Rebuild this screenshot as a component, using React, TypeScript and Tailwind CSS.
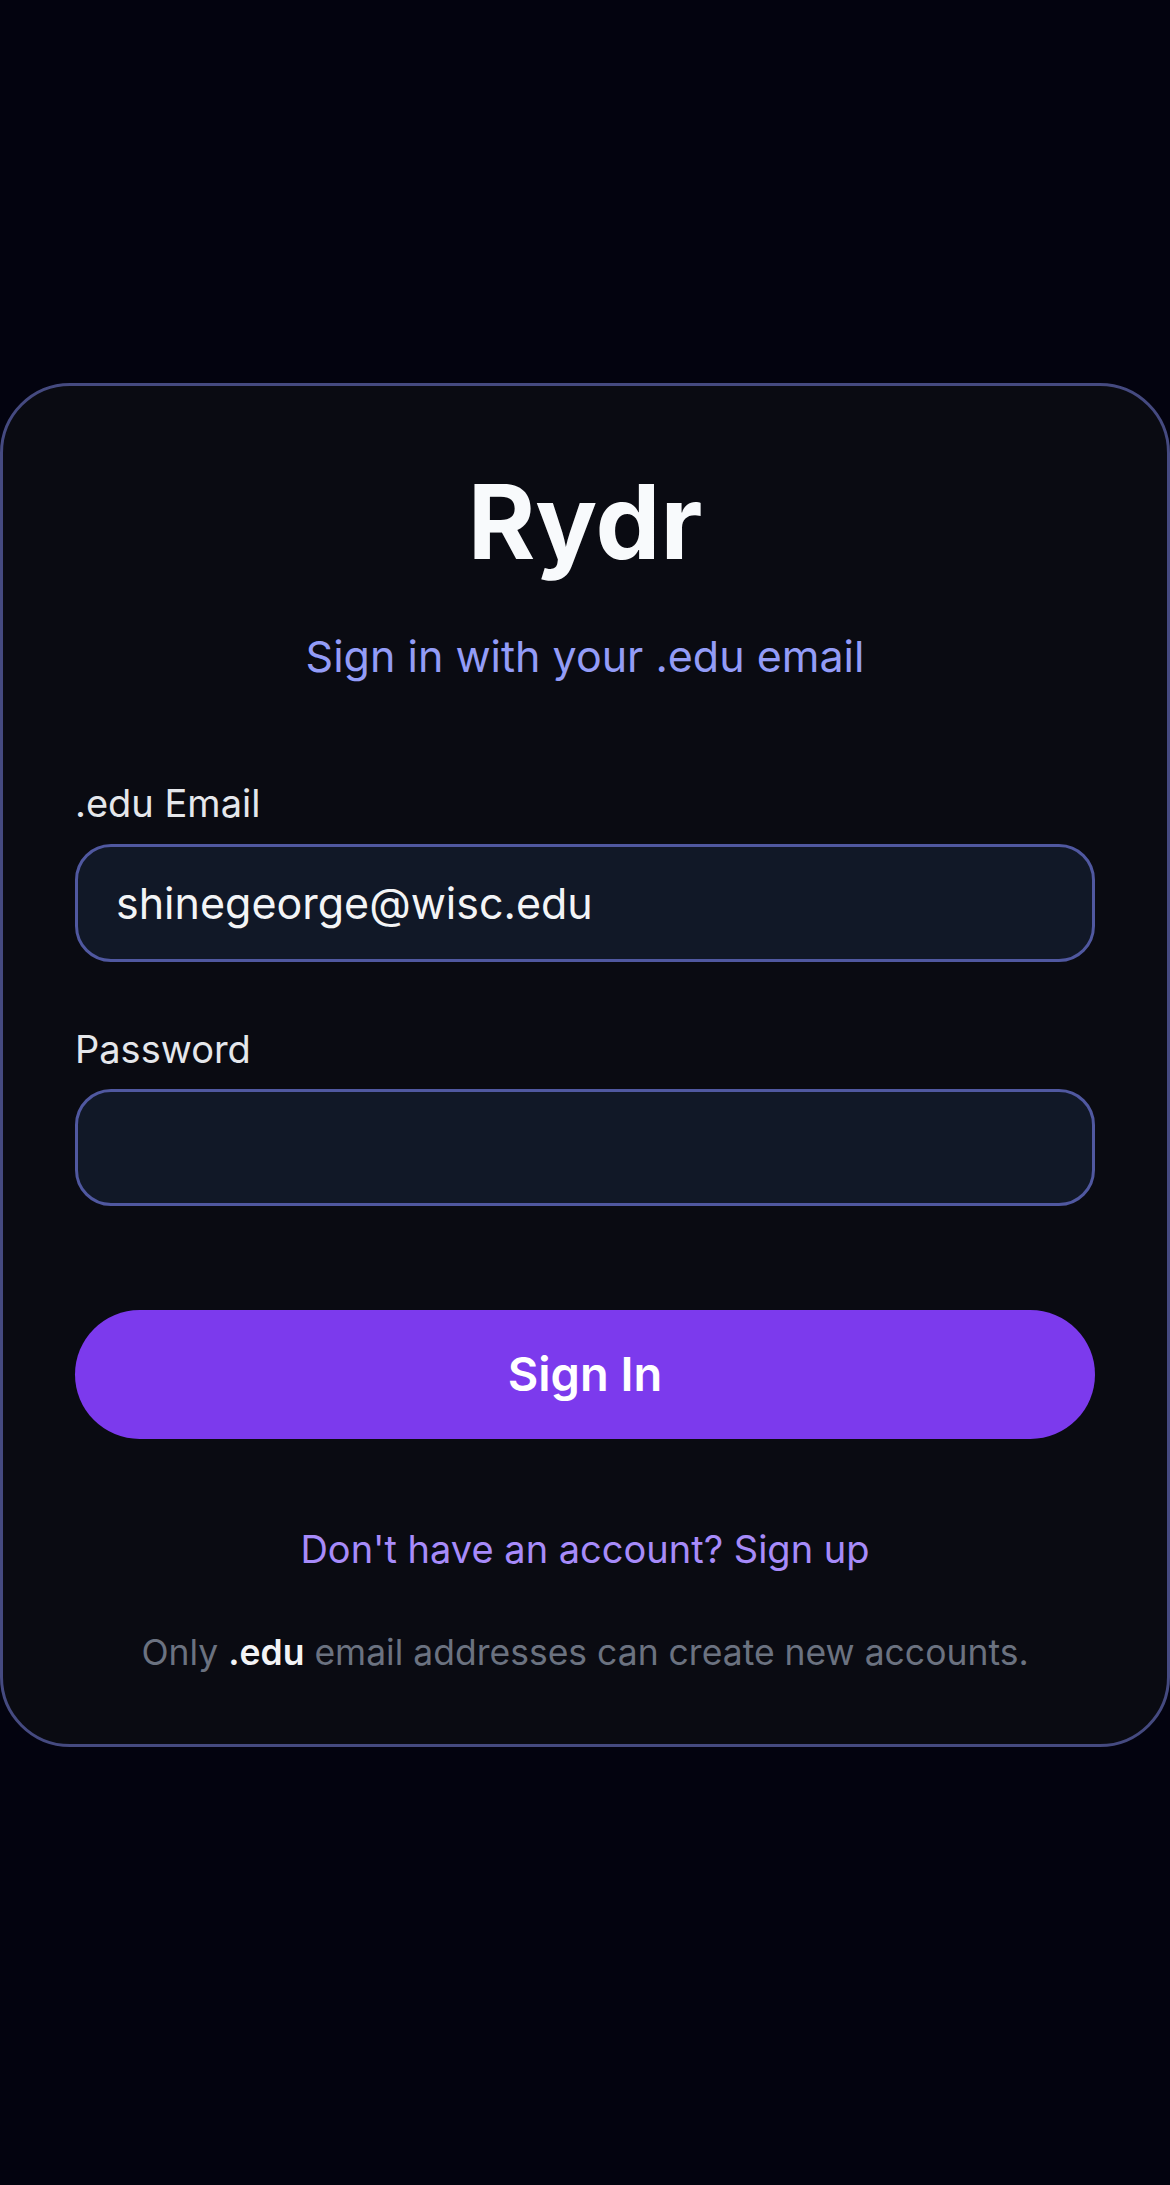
import { useState } from "react";

export default function App() {
  const [email, setEmail] = useState("shinegeorge@wisc.edu");
  const [password, setPassword] = useState("");

  return (
    <div
      className="flex min-h-[2185px] w-full flex-col bg-[#03030f] pt-[383px]"
      style={{ fontFamily: "Inter, 'Noto Sans', sans-serif" }}
    >
      <div className="flex flex-col rounded-[70px] border-[3px] border-[#454a80] bg-[#0a0b12] px-[72px] pb-[71px] pt-[84px]">
        <h1 className="text-center text-[103px] font-bold leading-[103px] text-[#f8fafc]">Rydr</h1>
        <p className="mt-[56px] text-center text-[43px] leading-[54px] text-[#939cf7]">
          Sign in with your .edu email
        </p>

        <form className="mt-[98px] flex flex-col" onSubmit={(e) => e.preventDefault()}>
          <label className="text-[38px] leading-[44px] text-[#e5e7eb]">.edu Email</label>
          <input
            className="mt-[19px] h-[118px] rounded-[36px] border-[3px] border-[#5058a0] bg-[#111827] px-[38px] text-[43px] text-[#f3f4f6] outline-none"
            value={email}
            onChange={(e) => setEmail(e.target.value)}
          />

          <label className="mt-[65px] text-[38px] leading-[44px] text-[#e5e7eb]">Password</label>
          <input
            type="password"
            className="mt-[18px] h-[117px] rounded-[36px] border-[3px] border-[#5058a0] bg-[#111827] px-[38px] text-[43px] text-[#f3f4f6] outline-none"
            value={password}
            onChange={(e) => setPassword(e.target.value)}
          />

          <button
            type="submit"
            className="mt-[104px] h-[129px] rounded-full bg-[#7c3aed] text-[47px] font-semibold text-white"
          >
            Sign In
          </button>
        </form>

        <p className="mt-[88px] text-center text-[38px] leading-[44px] text-[#a78bfa]">
          Don't have an account? Sign up
        </p>
        <p className="mt-[62px] text-center text-[35.5px] leading-[40px] text-[#6b7280]">
          Only <span className="font-semibold text-[#f3f4f6]">.edu</span> email addresses can create new accounts.
        </p>
      </div>
    </div>
  );
}
